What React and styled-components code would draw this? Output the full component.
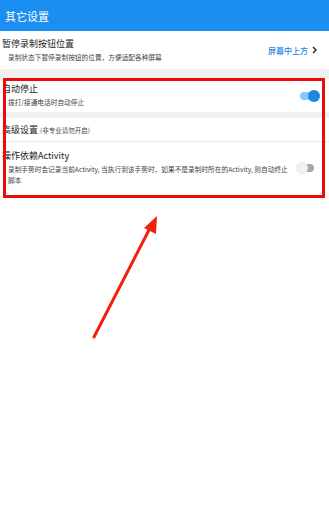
import React from "react";
import styled, { createGlobalStyle } from "styled-components";

const Global = createGlobalStyle`
  html, body { margin: 0; padding: 0; background: #fff; }
  body { font-family: "Noto Sans CJK SC", "Noto Sans", sans-serif; }
  * { box-sizing: border-box; }
`;

const Page = styled.div`
  position: relative;
  width: 329px;
  height: 532px;
  background: #fff;
  overflow: hidden;
`;

const Header = styled.div`
  height: 31px;
  background: #1b8ef2;
  color: #fff;
  font-size: 11px;
  display: flex;
  align-items: center;
  padding-left: 5px;
`;

const Row = styled.div`
  background: #fff;
  display: flex;
  align-items: center;
  height: ${(p) => p.$h}px;
  border-bottom: ${(p) => (p.$divider ? "1px solid #ececec" : "none")};
`;

const Texts = styled.div`
  flex: 1;
  display: flex;
  flex-direction: column;
  padding-left: 2px;
`;

const Title = styled.div`
  font-size: 9px;
  line-height: 12px;
  color: #222;
`;

const Small = styled.span`
  font-size: 6.5px;
  color: #444;
`;

const Sub = styled.div`
  font-size: 6.7px;
  line-height: 11px;
  color: #444;
  padding-left: 6px;
  padding-right: ${(p) => p.$pr || 0}px;
  margin-top: 2px;
`;

const Gap = styled.div`
  height: ${(p) => p.$h}px;
  background: #f1f1f1;
`;

const Value = styled.div`
  display: flex;
  align-items: center;
  gap: 4px;
  color: #1b87e6;
  font-size: 8px;
  font-weight: 500;
  padding-right: 12px;
`;

const Track = styled.div`
  position: relative;
  width: ${(p) => (p.$on ? 18 : 16)}px;
  height: 8px;
  border-radius: 4px;
  background: ${(p) => (p.$on ? "#8ec7f5" : "#a8a8a8")};
  margin-right: ${(p) => p.$mr}px;
  flex-shrink: 0;
`;

const Thumb = styled.div`
  position: absolute;
  top: -2px;
  ${(p) => (p.$on ? "right: -2px;" : "left: -2px;")}
  width: 12px;
  height: 12px;
  border-radius: 50%;
  background: ${(p) => (p.$on ? "#1a86e8" : "#f2f2f2")};
  box-shadow: ${(p) => (p.$on ? "none" : "0 0 1px rgba(0,0,0,0.15)")};
`;

const RedBox = styled.div`
  position: absolute;
  left: 3px;
  top: 78px;
  width: 322px;
  height: 120px;
  border: 3px solid #ee0a0a;
  pointer-events: none;
`;

const Arrow = styled.svg`
  position: absolute;
  left: 0;
  top: 0;
  pointer-events: none;
`;

function Toggle({ on, mr }) {
  return (
    <Track $on={on} $mr={mr}>
      <Thumb $on={on} />
    </Track>
  );
}

export default function App() {
  return (
    <Page>
      <Global />
      <Header>其它设置</Header>
      <Row $h={38}>
        <Texts>
          <Title>暂停录制按钮位置</Title>
          <Sub>录制状态下暂停录制按钮的位置，方便适配各种屏幕</Sub>
        </Texts>
        <Value>
          屏幕中上方
          <svg width="5" height="8" viewBox="0 0 5 8">
            <path d="M1 1 L4 4 L1 7" fill="none" stroke="#222" strokeWidth="1.4" />
          </svg>
        </Value>
      </Row>
      <Gap $h={10} />
      <Row $h={33}>
        <Texts>
          <Title>自动停止</Title>
          <Sub>拨打/接通电话时自动停止</Sub>
        </Texts>
        <Toggle on mr={11} />
      </Row>
      <Gap $h={6} />
      <Row $h={24} $divider>
        <Texts>
          <Title>
            高级设置 <Small>(非专业请勿开启)</Small>
          </Title>
        </Texts>
      </Row>
      <Row $h={52}>
        <Texts>
          <Title>操作依赖Activity</Title>
          <Sub $pr={7}>
            录制手势时会记录当前Activity, 当执行到该手势时，如果不是录制时所在的Activity, 则自动终止脚本
          </Sub>
        </Texts>
        <Toggle mr={15} />
      </Row>
      <RedBox />
      <Arrow width="329" height="532" viewBox="0 0 329 532">
        <line x1="94" y1="337" x2="150" y2="228" stroke="#f2200c" strokeWidth="3" strokeLinecap="round" />
        <polygon points="157,216 156,234 144,228" fill="#f2200c" />
      </Arrow>
    </Page>
  );
}
